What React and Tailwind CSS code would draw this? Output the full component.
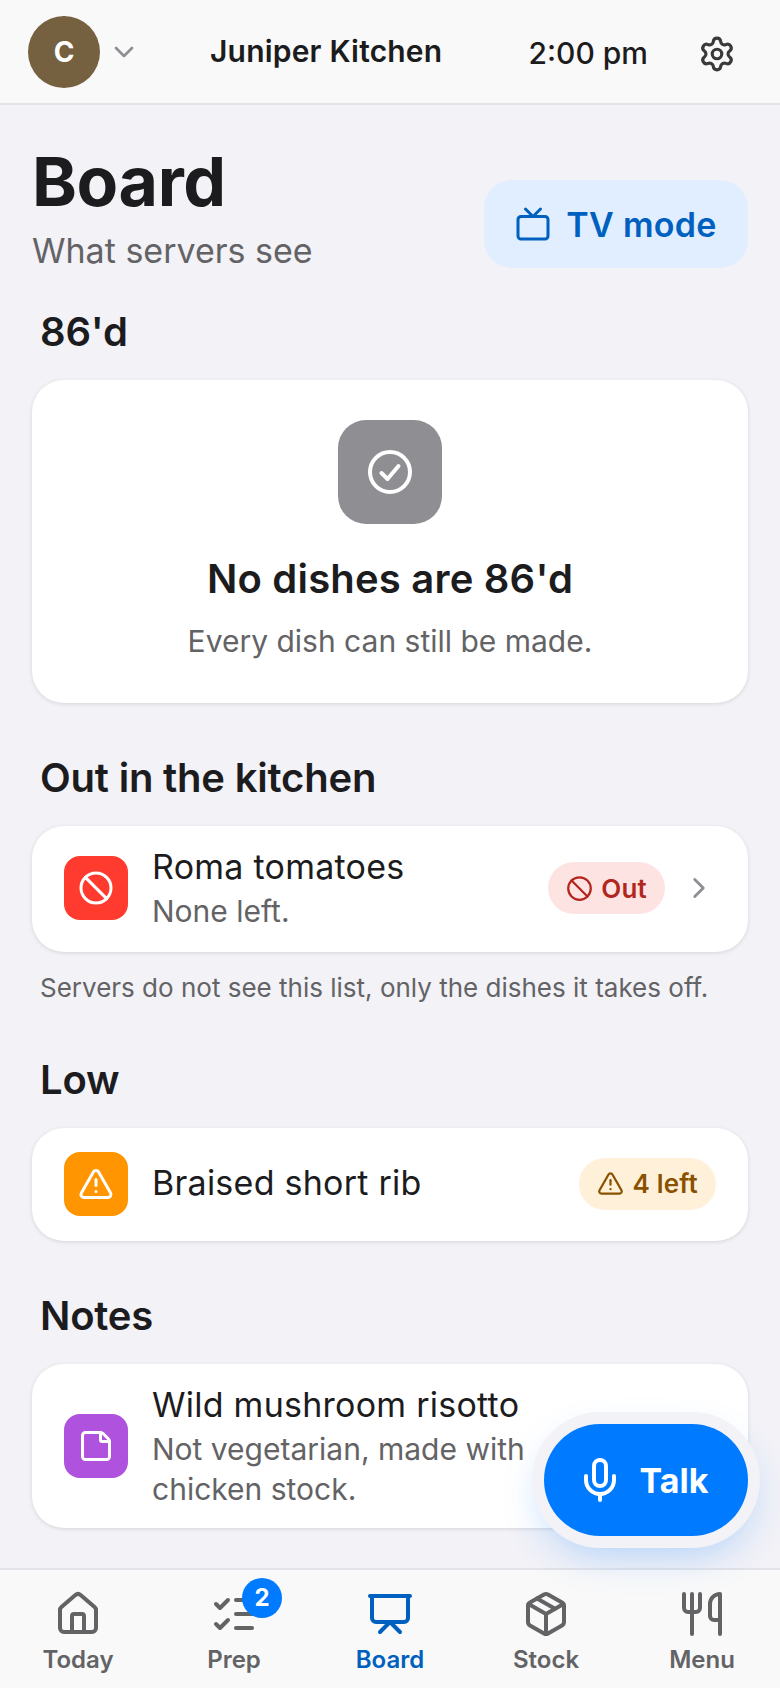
import { Ban, ChevronDown, ChevronRight, House, ListChecks, Mic, Package, Presentation, Settings, StickyNote, TriangleAlert, Tv, Utensils } from "lucide-react";

function SectionTitle({ children, className = "" }) {
    return (
        <h2 className={`px-[8px] text-[40px] leading-[48px] font-semibold tracking-[-0.2px] text-[#1c1c1e] ${className}`}>
            {children}
        </h2>
    );
}

function Row({ icon: Icon, tint, title, note, badge, chevron, className = "" }) {
    return (
        <div className={`flex items-center rounded-[32px] bg-white px-[32px] shadow-[0_1px_4px_rgba(0,0,0,0.12)] ${className}`}>
            <div className={`flex h-[64px] w-[64px] shrink-0 items-center justify-center rounded-[16px] ${tint}`}>
                <Icon className="h-[36px] w-[36px] text-white" strokeWidth={2} />
            </div>
            <div className="ml-[24px] flex min-w-0 flex-1 flex-col gap-[3px]">
                <div className="text-[34px] leading-[42px] tracking-[0.25px] text-[#1c1c1e]">{title}</div>
                {note && <div className="text-[30px] leading-[40px] text-[#636366]">{note}</div>}
            </div>
            {badge}
            {chevron && <ChevronRight className="ml-[17px] h-[34px] w-[34px] text-[#8e8e93]" strokeWidth={2} />}
        </div>
    );
}

function Badge({ icon: Icon, className, children }) {
    return (
        <span className={`flex h-[52px] items-center gap-[8px] rounded-full px-[18px] text-[26px] font-semibold tracking-[0.2px] ${className}`}>
            <Icon className="h-[27px] w-[27px]" strokeWidth={2} />
            {children}
        </span>
    );
}

function Tab({ icon: Icon, label, active, count }) {
    return (
        <div className={`relative flex flex-1 flex-col items-center ${active ? "text-[#0060c0]" : "text-[#636366]"}`}>
            <div className="relative">
                <Icon className="h-[48px] w-[48px]" strokeWidth={2} />
                {count && (
                    <span className="absolute left-[32px] top-[-12px] flex h-[40px] w-[40px] items-center justify-center rounded-full bg-[#007aff] text-[24px] font-bold text-white">
                        {count}
                    </span>
                )}
            </div>
            <span className="mt-[7px] text-[24px] leading-[30px] font-semibold">{label}</span>
        </div>
    );
}

export default function App() {
    return (
        <div className="relative flex h-[1688px] w-[780px] flex-col overflow-hidden bg-[#f2f2f7] font-['Inter',sans-serif]">
            <header className="flex h-[105px] shrink-0 items-center border-b-2 border-[#e3e3e8] bg-[#f9f9f9] pl-[28px] pr-[44px]">
                <div className="flex h-[72px] w-[72px] items-center justify-center rounded-full bg-[#75603f] text-[28px] font-bold text-white">
                    C
                </div>
                <ChevronDown className="ml-[8px] h-[32px] w-[32px] text-[#8e8e93]" strokeWidth={2} />
                <div className="ml-[70px] text-[30px] font-semibold tracking-[0.2px] text-[#1c1c1e]">Juniper Kitchen</div>
                <div className="ml-auto mt-[4px] text-[30px] font-medium text-[#1c1c1e]">2:00 pm</div>
                <Settings className="ml-[50px] mt-[4px] h-[38px] w-[38px] text-[#3a3a3c]" strokeWidth={2} />
            </header>

            <main className="flex-1 px-[32px]">
                <div className="mt-[36px] flex items-end justify-between">
                    <div>
                        <h1 className="mb-[9px] text-[68px] leading-[80px] font-bold tracking-[-0.4px] text-[#1c1c1e]">Board</h1>
                        <p className="text-[34px] leading-[42px] text-[#636366]">What servers see</p>
                    </div>
                    <button className="mb-[4px] flex h-[88px] w-[264px] items-center justify-center gap-[15px] rounded-[28px] bg-[#e0eeff] text-[34px] font-semibold tracking-[0.3px] text-[#0060c0]">
                        <Tv className="h-[36px] w-[36px]" strokeWidth={2} />
                        TV mode
                    </button>
                </div>

                <SectionTitle className="mt-[36px]">86'd</SectionTitle>
                <div className="mt-[24px] flex h-[323px] flex-col items-center rounded-[32px] bg-white pt-[40px] shadow-[0_1px_4px_rgba(0,0,0,0.12)]">
                    <div className="flex h-[104px] w-[104px] items-center justify-center rounded-[28px] bg-[#8e8e93]">
                        <svg className="h-[48px] w-[48px] text-white" viewBox="0 0 24 24" fill="none" stroke="currentColor" strokeWidth={2} strokeLinecap="round" strokeLinejoin="round">
                            <circle cx="12" cy="12" r="10" />
                            <path d="m7.75 12.5 3 3 5.5-6.5" />
                        </svg>
                    </div>
                    <div className="mt-[31px] text-[40px] leading-[48px] font-semibold tracking-[0.2px] text-[#1c1c1e]">No dishes are 86'd</div>
                    <div className="mt-[18px] text-[30px] leading-[40px] text-[#636366]">Every dish can still be made.</div>
                </div>

                <SectionTitle className="mt-[51px]">Out in the kitchen</SectionTitle>
                <Row
                    className="mt-[24px] h-[126px] pb-[2px]"
                    icon={Ban}
                    tint="bg-[#ff3b30]"
                    title="Roma tomatoes"
                    note="None left."
                    chevron
                    badge={<Badge icon={Ban} className="bg-[#fde4e3] text-[#b3261e]">Out</Badge>}
                />
                <p className="mt-[20px] px-[8px] text-[26px] leading-[32px] text-[#636366]">
                    Servers do not see this list, only the dishes it takes off.
                </p>

                <SectionTitle className="mt-[52px]">Low</SectionTitle>
                <Row
                    className="mt-[24px] h-[113px] pb-[2px]"
                    icon={TriangleAlert}
                    tint="bg-[#ff9500]"
                    title={<span className="mb-[2px] block">Braised short rib</span>}
                    badge={<Badge icon={TriangleAlert} className="bg-[#fff1d9] text-[#8a5200]">4 left</Badge>}
                />

                <SectionTitle className="mt-[51px]">Notes</SectionTitle>
                <Row
                    className="mt-[24px] h-[164px]"
                    icon={StickyNote}
                    tint="bg-[#af52de]"
                    title="Wild mushroom risotto"
                    note={<span className="block w-[380px]">Not vegetarian, made with chicken stock.</span>}
                />
            </main>

            <nav className="flex h-[120px] shrink-0 items-start border-t-2 border-[#e3e3e8] bg-[#f9f9f9] pt-[20px]">
                <Tab icon={House} label="Today" />
                <Tab icon={ListChecks} label="Prep" count="2" />
                <Tab icon={Presentation} label="Board" active />
                <Tab icon={Package} label="Stock" />
                <Tab icon={Utensils} label="Menu" />
            </nav>

            <button className="absolute left-[544px] top-[1424px] flex h-[112px] w-[204px] items-center justify-center gap-[16px] rounded-full bg-[#007aff] pr-[8px] text-[34px] font-bold text-white shadow-[0_0_0_12px_#f2f2f7,0_16px_40px_rgba(0,122,255,0.3)]">
                <Mic className="h-[48px] w-[48px]" strokeWidth={2} />
                Talk
            </button>
        </div>
    );
}
